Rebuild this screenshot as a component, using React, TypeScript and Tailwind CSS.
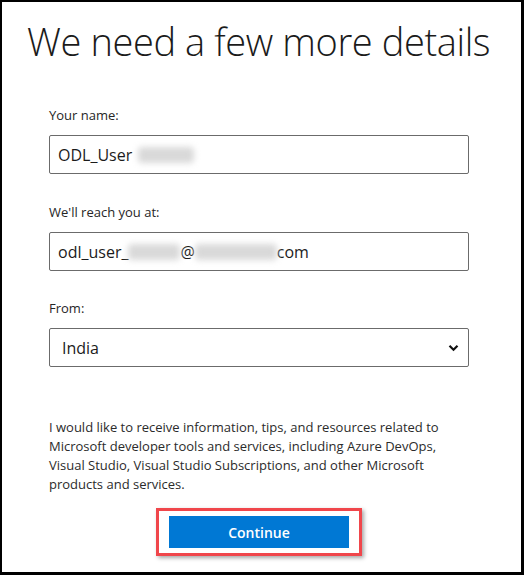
import React from 'react';

function Blur({ w }: { w: number }) {
  return (
    <span
      className="inline-block h-[16px] align-middle rounded-sm bg-[#d9d9d9] blur-[3px]"
      style={{ width: w }}
    />
  );
}

export default function App() {
  return (
    <div className="w-[524px] h-[575px] bg-black pl-[2px] pt-[2px] pr-[3px] pb-[3px]">
      <div
        className="h-full bg-white text-[#1b1b1b] overflow-hidden"
        style={{ fontFamily: '"Open Sans", "Noto Sans", sans-serif' }}
      >
        {/* Heading */}
        <h1 className="pl-[25px] pt-[14px] text-[38px] font-light leading-[51px] tracking-[-0.4px] text-[#1b1b1b] whitespace-nowrap">
          We need a few more details
        </h1>

        <div className="pl-[47px] pr-[52px] pt-[39px]">
          {/* Name */}
          <label className="block text-[13px] leading-[18px] text-[#262626]">Your name:</label>
          <div className="mt-[11px] h-[39px] border border-[#6b6b6b] rounded-[2px] flex items-center pl-[8px] text-[16px]">
            ODL_User<span className="w-[6px]" />
            <Blur w={56} />
          </div>

          {/* Email */}
          <label className="block mt-[29px] text-[13px] leading-[18px] text-[#262626]">We'll reach you at:</label>
          <div className="mt-[11px] h-[39px] border border-[#6b6b6b] rounded-[2px] flex items-center pl-[8px] text-[16px]">
            odl_user_
            <Blur w={52} />
            @
            <Blur w={82} />
            com
          </div>

          {/* Country */}
          <label className="block mt-[28px] text-[13px] leading-[18px] text-[#262626]">From:</label>
          <div className="mt-[11px] h-[39px] border border-[#6b6b6b] rounded-[2px] flex items-center justify-between pl-[12px] pr-[9px] text-[16px]">
            <span>India</span>
            <svg width="11" height="8" viewBox="0 0 11 8">
              <path d="M1.5 1.8 L5.5 5.8 L9.5 1.8" fill="none" stroke="#111" strokeWidth="2.2" />
            </svg>
          </div>

          {/* Consent text */}
          <p className="mt-[51px] text-[13px] leading-[19px] text-[#2b2b2b] w-[420px]">
            I would like to receive information, tips, and resources related to Microsoft developer tools and services, including Azure DevOps, Visual Studio, Visual Studio Subscriptions, and other Microsoft products and services.
          </p>

          {/* Continue button with highlight */}
          <div className="mt-[14px] flex justify-center">
            <div className="border-[3px] border-[#f0464b] shadow-[2px_2px_4px_rgba(0,0,0,0.35)] px-[10px] py-[5px]">
              <button className="w-[180px] h-[32px] bg-[#0078d4] text-white text-[14px] font-semibold">
                Continue
              </button>
            </div>
          </div>
        </div>
      </div>
    </div>
  );
}
